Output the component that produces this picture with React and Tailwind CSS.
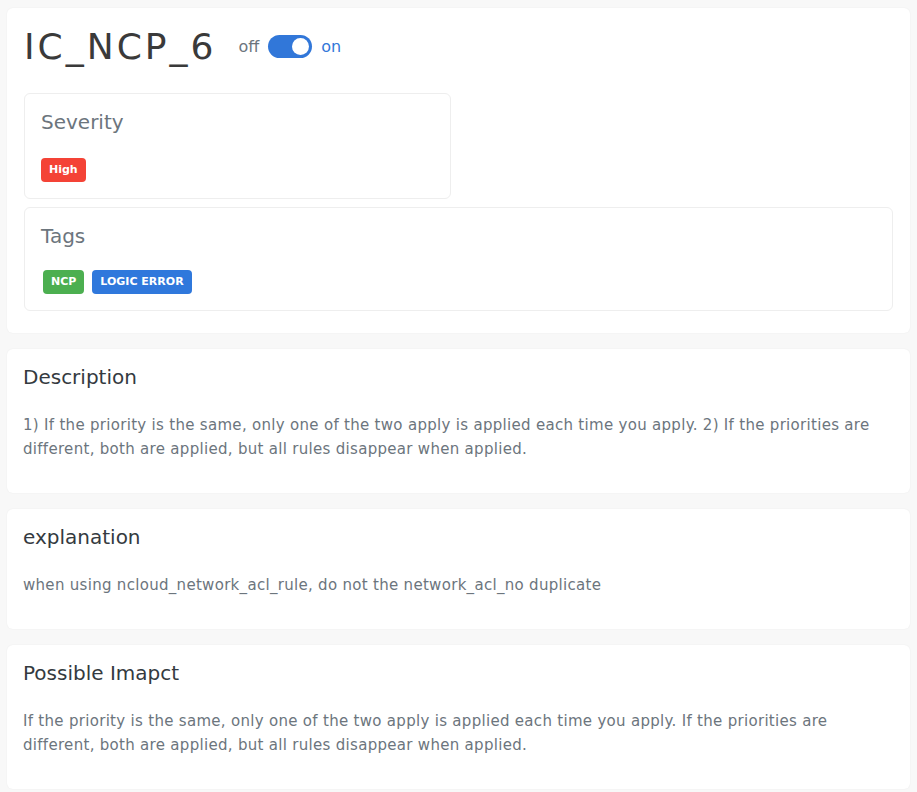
import React from 'react';

const font = { fontFamily: '"DejaVu Sans", "Noto Sans", sans-serif' };

function Badge({ color, children }) {
  return (
    <span className={`inline-flex h-6 items-center rounded px-2 text-[11px] font-bold text-white ${color}`}>
      {children}
    </span>
  );
}

function InfoCard({ title, children }) {
  return (
    <section className="mb-4 rounded-md bg-white px-4 pt-4 pb-8 shadow-[0_0_2px_rgba(0,0,0,0.06)]">
      <h2 className="mb-6 text-[20px] leading-6 text-[#343a40]">{title}</h2>
      <p className="text-[15px] leading-6 tracking-[0.3px] text-[#6c757d]">{children}</p>
    </section>
  );
}

export default function App() {
  return (
    <div className="min-h-screen bg-[#f8f8f8] px-[7px] pt-2" style={font}>
      <section className="mb-4 rounded-md bg-white px-[17px] pt-[17px] pb-[22px] shadow-[0_0_2px_rgba(0,0,0,0.06)]">
        <div className="flex items-center">
          <h1 className="text-[36px] leading-[43px] tracking-[3px] text-[#3a3a3a]">IC_NCP_6</h1>
          <div className="ml-[22px] flex items-center gap-[9px] text-[16px]">
            <span className="text-[#6c757d]">off</span>
            <span className="flex h-[23px] w-[44px] items-center justify-end rounded-full bg-[#3177d9] px-[3px]">
              <span className="h-[17px] w-[17px] rounded-full bg-white" />
            </span>
            <span className="text-[#3177d9]">on</span>
          </div>
        </div>

        <div className="mt-[25px] w-[427px] rounded-md border border-[#eeeeee] px-4 pt-4 pb-4">
          <h3 className="mb-[22px] text-[20px] leading-6 text-[#6c757d]">Severity</h3>
          <Badge color="bg-[#f44336]">High</Badge>
        </div>

        <div className="mt-2 rounded-md border border-[#eeeeee] px-4 pt-4 pb-4">
          <h3 className="mb-[22px] text-[20px] leading-6 text-[#6c757d]">Tags</h3>
          <div className="flex gap-2 pl-[2px]">
            <Badge color="bg-[#4caf50]">NCP</Badge>
            <Badge color="bg-[#2f78dc]">LOGIC ERROR</Badge>
          </div>
        </div>
      </section>

      <InfoCard title="Description">
        1) If the priority is the same, only one of the two apply is applied each time you apply. 2) If the
        priorities are different, both are applied, but all rules disappear when applied.
      </InfoCard>

      <InfoCard title="explanation">
        when using ncloud_network_acl_rule, do not the network_acl_no duplicate
      </InfoCard>

      <InfoCard title="Possible Imapct">
        If the priority is the same, only one of the two apply is applied each time you apply. If the priorities
        are different, both are applied, but all rules disappear when applied.
      </InfoCard>
    </div>
  );
}
